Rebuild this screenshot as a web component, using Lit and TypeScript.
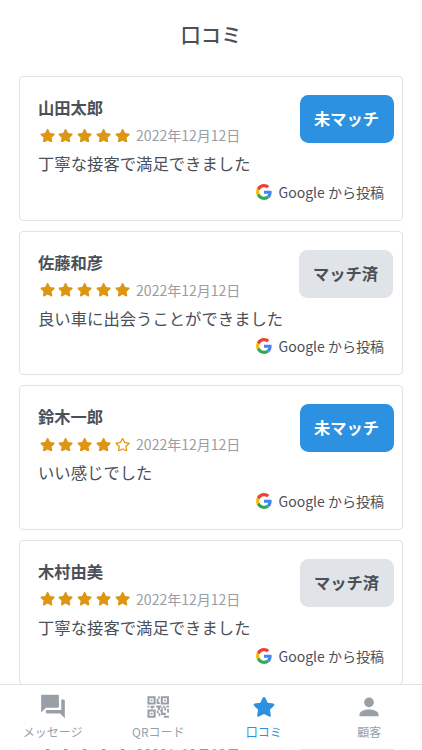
import { LitElement, html, css, svg } from "lit";
import { customElement, property } from "lit/decorators.js";
import { classMap } from "lit/directives/class-map.js";

interface Review {
  name: string;
  rating: number;
  date: string;
  text: string;
  matched: boolean;
  wide?: boolean;
}

const REVIEWS: Review[] = [
  { name: "山田太郎", rating: 5, date: "2022年12月12日", text: "丁寧な接客で満足できました", matched: false },
  { name: "佐藤和彦", rating: 5, date: "2022年12月12日", text: "良い車に出会うことができました", matched: true, wide: true },
  { name: "鈴木一郎", rating: 4, date: "2022年12月12日", text: "いい感じでした", matched: false },
  { name: "木村由美", rating: 5, date: "2022年12月12日", text: "丁寧な接客で満足できました", matched: true },
  { name: "高橋健一", rating: 5, date: "2022年12月12日", text: "丁寧な接客で満足できました", matched: true },
];

const STAR =
  "M259.3 17.8L194 150.2 47.9 171.5c-26.200 3.800-36.700 36.100-17.700 54.600l105.700 103-25 145.500c-4.500 26.300 23.200 46 46.400 33.700L288 439.600l130.700 68.700c23.200 12.200 50.900-7.400 46.400-33.700l-25-145.500 105.700-103c19-18.500 8.500-50.800-17.700-54.600L382 150.200 316.700 17.800c-11.700-23.600-45.600-23.900-57.400 0z";
const STAR_OUTLINE =
  "M528.1 171.5L382 150.2 316.7 17.8c-11.700-23.600-45.600-23.900-57.400 0L194 150.2 47.9 171.5c-26.200 3.800-36.700 36.100-17.700 54.600l105.700 103-25 145.500c-4.500 26.300 23.200 46 46.400 33.700L288 439.600l130.700 68.700c23.200 12.200 50.900-7.400 46.400-33.700l-25-145.500 105.700-103c19-18.500 8.500-50.800-17.700-54.600zM388.600 312.3l23.700 138.400L288 385.4l-124.300 65.300 23.700-138.400-100.600-98 139-20.200 62.200-126 62.200 126 139 20.200-100.600 98z";

@customElement("review-card")
export class ReviewCard extends LitElement {
  @property({ attribute: false }) review!: Review;

  static styles = css`
    :host {
      display: block;
    }
    .card {
      box-sizing: border-box;
      height: 144.6px;
      border: 1px solid #e0e2e5;
      border-radius: 4px;
      padding: 18px 8.5px 0 18px;
      background: #fff;
      color: #4b5058;
    }
    .top {
      display: flex;
      justify-content: space-between;
      height: 52px;
    }
    .name {
      font-size: 16.3px;
      line-height: 25px;
      font-weight: 700;
    }
    .meta {
      display: flex;
      align-items: center;
      height: 30px;
      padding-left: 1.6px;
    }
    .star {
      width: 15.2px;
      height: 13.5px;
      margin-right: 3.6px;
      fill: #dc9614;
    }
    .date {
      margin-left: 2.6px;
      font-size: 14.03px;
      color: #999da4;
    }
    .badge {
      box-sizing: border-box;
      width: 94px;
      height: 48px;
      border: 0;
      padding: 0 0 2px;
      border-radius: 8.5px;
      font: inherit;
      font-size: 16.3px;
      font-weight: 700;
      line-height: 46px;
      background: #2b91e0;
      color: #fff;
    }
    .badge.matched {
      background: #e0e4e8;
      color: #4b5058;
    }
    .badge.wide {
      margin-right: 1px;
    }
    .text {
      font-size: 16.35px;
      line-height: 28px;
      padding-top: 2px;
    }
    .source {
      display: flex;
      justify-content: flex-end;
      align-items: center;
      gap: 6.8px;
      height: 29px;
      padding-right: 9.5px;
      font-size: 14.03px;
    }
    .google {
      width: 16px;
      height: 16px;
    }
  `;

  render() {
    const r = this.review;
    return html`
      <article class="card">
        <div class="top">
          <div>
            <div class="name">${r.name}</div>
            <div class="meta">
              ${[1, 2, 3, 4, 5].map(
                (n) => html`<svg class="star" viewBox="0 0 576 512"><path d=${n <= r.rating ? STAR : STAR_OUTLINE} /></svg>`
              )}
              <span class="date">${r.date}</span>
            </div>
          </div>
          <button class=${classMap({ badge: true, matched: r.matched, wide: !!r.wide })}>
            ${r.matched ? "マッチ済" : "未マッチ"}
          </button>
        </div>
        <div class="text">${r.text}</div>
        <div class="source">
          <svg class="google" viewBox="0 0 48 48">
            <path fill="#EA4335" d="M24 9.500c3.540 0 6.710 1.220 9.210 3.600l6.850-6.850C35.900 2.380 30.470 0 24 0 14.620 0 6.510 5.380 2.560 13.220l7.980 6.190C12.430 13.720 17.740 9.500 24 9.500z" />
            <path fill="#4285F4" d="M46.980 24.550c0-1.570-.15-3.090-.38-4.550H24v9.020h12.940c-.58 2.960-2.260 5.480-4.780 7.180l7.730 6c4.510-4.180 7.090-10.360 7.090-17.650z" />
            <path fill="#FBBC05" d="M10.530 28.590c-.48-1.450-.76-2.990-.76-4.590s.27-3.140.76-4.590l-7.980-6.190C.92 16.460 0 20.120 0 24c0 3.880.92 7.540 2.560 10.780l7.970-6.190z" />
            <path fill="#34A853" d="M24 48c6.480 0 11.930-2.130 15.890-5.810l-7.730-6c-2.150 1.450-4.920 2.300-8.160 2.300-6.260 0-11.570-4.220-13.470-9.910l-7.980 6.190C6.510 42.620 14.620 48 24 48z" />
          </svg>
          <span>Google から投稿</span>
        </div>
      </article>
    `;
  }
}

const TABS = [
  {
    label: "メッセージ",
    box: "1 1.400 22 22",
    icon: svg`<path d="M21 6h-2v9H6v2c0 .55.45 1 1 1h11l4 4V7c0-.55-.45-1-1-1zm-4 6V3c0-.55-.45-1-1-1H3c-.55 0-1 .45-1 1v14l4-4h10c.55 0 1-.45 1-1z" />`,
  },
  {
    label: "QRコード",
    box: "-.9 -.7 25.400 25.400",
    icon: svg`<path fill-rule="evenodd" d="M1.500 1.500h8v8h-8zM3.500 3.500v4h4v-4zM4.600 4.600h1.800v1.800h-1.800zM14.500 1.500h8v8h-8zM16.500 3.500v4h4v-4zM17.600 4.600h1.800v1.800h-1.800zM1.500 14.500h8v8h-8zM3.500 16.500v4h4v-4zM4.600 17.600h1.800v1.800h-1.800z" /><path d="M12 1.500h1.500v2.500h-1.500zM10.500 4h1.800v3h1.200v2h-3zM1.500 10.700h1.800v1.800h-1.800zM4.500 10.700h4v1.800h-1.500v1h-2v-1h-.5zM10 10.500h5v2h-1.300v2.500h-2v-2.500h-1.700zM16.500 10.700h2v1.800h-2zM20 10.700h2.500v1.800h-2.500zM15 12.500h1.700v1.800h-1.700zM18 12.500h1.800v3h-1.800zM20.700 14h1.800v3.500h-1.800zM10.700 15.500h1.800v2.500h-1.800zM14 14.500h2.500v3.200h3v2h-4.700v-3h-.8zM12.500 18h1.600v3h-1.600zM17.500 20.500h5v2h-5z" />`,
  },
  {
    label: "口コミ",
    box: "0 0 24 24",
    icon: svg`<path transform="translate(1.720 2.700) scale(.0357)" d=${STAR} />`,
  },
  {
    label: "顧客",
    box: "0 0 24 24",
    icon: svg`<circle cx="12" cy="7.700" r="4.500" /><path d="M3.200 20.500v-1.500c0-3.200 4.800-4.700 8.800-4.700s8.800 1.500 8.800 4.700v1.500z" />`,
  },
];

@customElement("app-root")
export class AppRoot extends LitElement {
  static styles = css`
    :host {
      display: block;
      position: relative;
      height: 750px;
      overflow: hidden;
      background: #fff;
      font-family: "Noto Sans CJK JP", sans-serif;
    }
    .title {
      margin: 0;
      height: 76.3px;
      line-height: 68px;
      text-align: center;
      font-size: 20.3px;
      font-weight: 500;
      color: #4b5058;
    }
    .list {
      display: flex;
      flex-direction: column;
      gap: 10px;
      padding: 0 19px;
    }
    .tabs {
      position: absolute;
      inset: 684px 0 auto;
      box-sizing: border-box;
      height: 64.5px;
      display: grid;
      grid-template-columns: repeat(4, 1fr);
      background: #fff;
      border-top: 1px solid #dfe1e3;
    }
    .tab {
      display: flex;
      flex-direction: column;
      align-items: center;
      padding-top: 9px;
      color: #999fa7;
    }
    .tab.active {
      color: #2b91e0;
    }
    .icon {
      width: 26px;
      height: 26px;
      fill: currentColor;
    }
    .label {
      margin-top: 2px;
      font-size: 12px;
      line-height: 20px;
    }
  `;

  render() {
    return html`
      <h1 class="title">口コミ</h1>
      <main class="list">
        ${REVIEWS.map((r) => html`<review-card .review=${r}></review-card>`)}
      </main>
      <nav class="tabs">
        ${TABS.map(
          (t, i) => html`
            <div class=${classMap({ tab: true, active: i === 2 })}>
              <svg class="icon" viewBox=${t.box}>${t.icon}</svg>
              <span class="label">${t.label}</span>
            </div>
          `
        )}
      </nav>
    `;
  }
}
